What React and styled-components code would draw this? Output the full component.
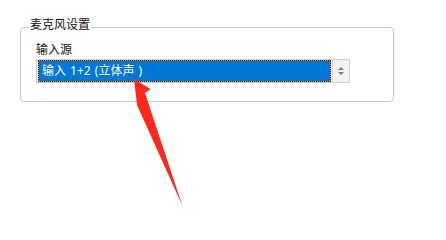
import React from "react";
import styled, { createGlobalStyle } from "styled-components";

const Global = createGlobalStyle`
  html, body { margin: 0; padding: 0; background: #ffffff; }
  body {
    font-family: "Noto Sans CJK SC", "Microsoft YaHei", "Noto Sans", sans-serif;
    font-size: 12px;
    color: #1a1a1a;
  }
`;

const Page = styled.div`
  position: relative;
  width: 446px;
  height: 237px;
  padding: 27px 0 0 20px;
  box-sizing: border-box;
`;

const Group = styled.section`
  position: relative;
  width: 374px;
  height: 75px;
  box-sizing: border-box;
  border: 1px solid #c8c8c8;
  border-radius: 4px;
  padding: 13px 0 0 15px;
  display: flex;
  flex-direction: column;
`;

const Legend = styled.div`
  position: absolute;
  left: 7px;
  top: -11px;
  padding: 0 2px;
  background: #ffffff;
  font-size: 12px;
  line-height: 14px;
  color: #111111;
`;

const Label = styled.div`
  font-size: 12px;
  line-height: 16px;
  margin-bottom: 2px;
  color: #111111;
`;

const Select = styled.div`
  display: flex;
  width: 314px;
  height: 24px;
  box-sizing: border-box;
  border: 1px solid #cfcfcf;
  background: #ffffff;
  padding: 0 0 0 1px;
`;

const Value = styled.div`
  flex: 1;
  display: flex;
  align-items: center;
  box-sizing: border-box;
  border: 1px dotted #111111;
  background: linear-gradient(#0078d7, #0078d7) padding-box, #f39a2b border-box;
  color: #ffffff;
  font-family: "Noto Sans", "Noto Sans CJK SC", sans-serif;
  font-size: 12px;
  line-height: 14px;
  word-spacing: 1px;
  padding: 0 0 1px 3px;
  white-space: pre;
`;

const Spin = styled.div`
  width: 17px;
  margin-left: 1px;
  box-sizing: border-box;
  border-left: 1px solid #d6d6d6;
  background: #f2f2f2;
  display: flex;
  flex-direction: column;
  align-items: center;
  justify-content: center;
  gap: 2px;
`;

const Tri = styled.div`
  width: 0;
  height: 0;
  border-left: 3px solid transparent;
  border-right: 3px solid transparent;
  ${(p) =>
    p.$up
      ? "border-bottom: 3px solid #7d7d7d;"
      : "border-top: 3px solid #7d7d7d;"}
`;

const Overlay = styled.svg`
  position: absolute;
  left: 0;
  top: 0;
  pointer-events: none;
`;

export default function App() {
  return (
    <>
      <Global />
      <Page>
        <Group>
          <Legend>麦克风设置</Legend>
          <Label>输入源</Label>
          <Select>
            <Value>{"输入 1+2 (立体声 )"}</Value>
            <Spin>
              <Tri $up />
              <Tri />
            </Spin>
          </Select>
        </Group>
        <Overlay width="446" height="237" viewBox="0 0 446 237">
          <polygon
            points="134,79 150.5,89 145,93 182.5,206 137,105"
            fill="#fb2a1c"
          />
        </Overlay>
      </Page>
    </>
  );
}
